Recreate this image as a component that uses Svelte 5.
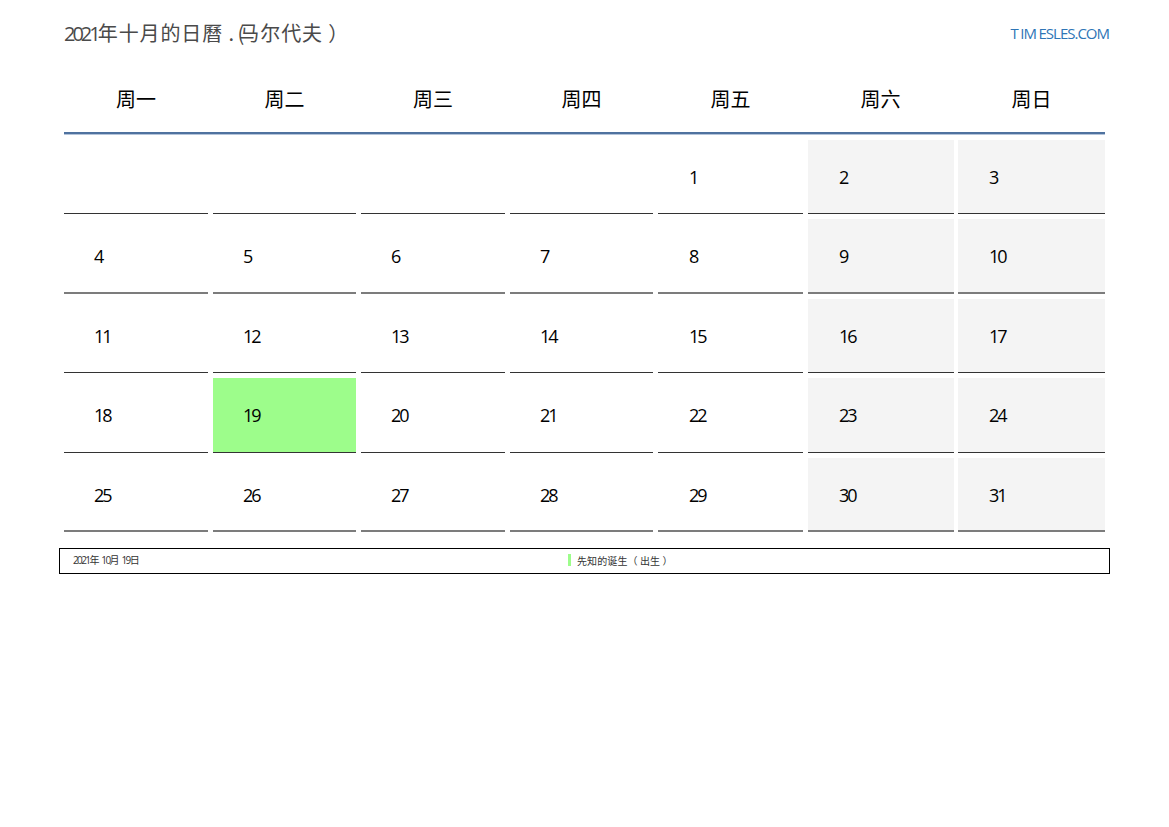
<script>
  const days = ['周一', '周二', '周三', '周四', '周五', '周六', '周日'];
  const cells = [
    '', '', '', '', '1', '2', '3',
    '4', '5', '6', '7', '8', '9', '10',
    '11', '12', '13', '14', '15', '16', '17',
    '18', '19', '20', '21', '22', '23', '24',
    '25', '26', '27', '28', '29', '30', '31'
  ];
  const softRows = [1, 4];
</script>

<div class="page">
  <header class="top">
    <h1 class="title"><span class="num">2021</span>年十月的日曆  <span class="dot">.</span><span class="paren">(</span>马尔代夫 ）</h1>
    <div class="site"><span class="wide">T</span>I<span class="wide">M</span>ESLES.COM</div>
  </header>

  <div class="grid heads">
    {#each days as d}
      <div class="head">{d}</div>
    {/each}
  </div>
  <div class="rule"></div>

  <div class="grid body">
    {#each cells as c, i}
      <div
        class="cell"
        class:late={i % 7 >= 4}
        class:sat={i % 7 === 5}
        class:weekend={i % 7 >= 5}
        class:soft={softRows.includes(Math.floor(i / 7))}
        class:today={c === '19'}
      >
        <span>{c}</span>
      </div>
    {/each}
  </div>

  <div class="legend">
    <div class="ldate">2021年 10月 19日</div>
    <div class="lname"><i class="mark"></i><span class="ltext">先知的诞生（ 出生 ）</span></div>
  </div>
</div>

<style>
  :global(body) {
    margin: 0;
    background: #fff;
  }
  .page {
    width: 1051px;
    margin-left: 59px;
    font-family: "Open Sans", "Noto Sans CJK SC", sans-serif;
    color: #000;
  }
  .top {
    display: flex;
    justify-content: space-between;
    align-items: flex-start;
    height: 66px;
    padding-left: 5px;
  }
  .title {
    margin: 18px 0 0;
    font-size: 20px;
    line-height: 30px;
    font-weight: 400;
    color: #4a4a4a;
    white-space: pre;
    letter-spacing: 0.9px;
    font-family: "Noto Sans CJK SC", sans-serif;
  }
  .num {
    font-family: "Open Sans", sans-serif;
    letter-spacing: -3px;
  }
  .dot {
    letter-spacing: 3.5px;
  }
  .paren {
    letter-spacing: -5px;
  }
  .site {
    margin: 25px 1px 0 0;
    font-size: 15px;
    line-height: 16px;
    color: #2e75b6;
    letter-spacing: -1px;
  }
  .wide {
    letter-spacing: 1.5px;
  }
  .grid {
    display: grid;
    grid-template-columns: 144px 143px 144px 143px 145px 145px 147px;
    column-gap: 5px;
    width: 1041px;
    margin-left: 5px;
  }
  .heads {
    height: 66px;
  }
  .head {
    font-size: 20px;
    line-height: 66px;
    text-align: center;
    font-family: "Noto Sans CJK SC", sans-serif;
  }
  .rule {
    width: 1041px;
    margin: 0 0 4.5px 5px;
    height: 2px;
    background: #4f729f;
    border-bottom: 1px solid #b4c4da;
  }
  .body {
    row-gap: 5px;
    grid-auto-rows: 74.5px;
  }
  .cell {
    box-sizing: border-box;
    border-bottom: 1px solid #333;
    padding-left: 30px;
    font-size: 18px;
    line-height: 74px;
    letter-spacing: -2px;
    background: #fff;
  }
  .late {
    padding-left: 31px;
  }
  .sat {
    margin-right: -1px;
  }
  .soft {
    border-bottom: 2px solid #7c7c7c;
  }
  .weekend {
    background: #f4f4f4;
  }
  .today {
    background: #9dfd8b;
  }
  .legend {
    box-sizing: border-box;
    display: flex;
    height: 26px;
    margin-top: 16px;
    border: 1px solid #000;
    font-size: 10px;
    line-height: 23px;
    color: #333;
  }
  .ldate {
    width: 495px;
    padding-left: 13px;
    letter-spacing: -1.6px;
    word-spacing: 2.5px;
    box-sizing: border-box;
    white-space: pre;
  }
  .lname {
    display: flex;
    align-items: center;
    padding: 0 0 2px 13px;
    font-family: "Noto Sans CJK SC", sans-serif;
    white-space: pre;
    letter-spacing: 0.1px;
  }
  .ltext {
    line-height: 12px;
    margin-top: 1px;
  }
  .mark {
    width: 3px;
    height: 12px;
    margin-right: 6px;
    background: #9dfd8b;
  }
</style>
